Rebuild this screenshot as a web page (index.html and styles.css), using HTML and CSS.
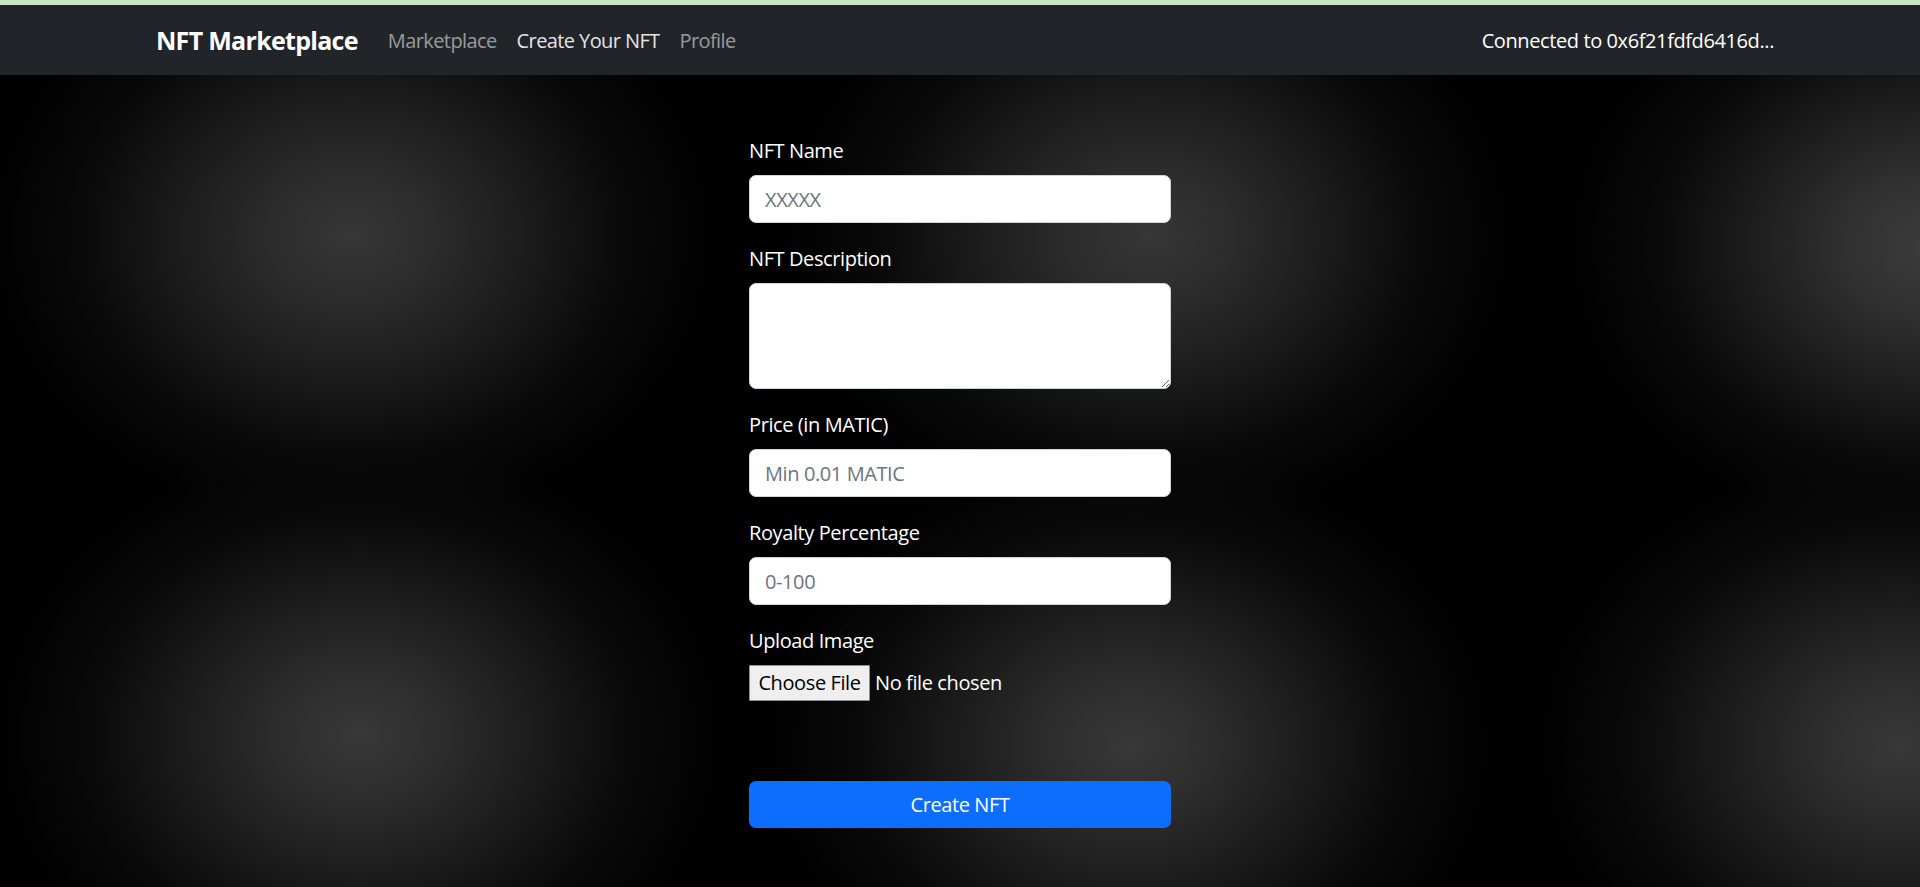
FILE: index.html
```html
<!DOCTYPE html>
<html lang="en">
<head>
<meta charset="utf-8">
<title>NFT Marketplace</title>
<link rel="stylesheet" href="styles.css">
</head>
<body>
<div class="top-strip"></div>
<nav class="navbar">
  <div class="nav-inner">
    <div class="nav-left">
      <a class="brand" href="#">NFT Marketplace</a>
      <a class="nav-link" href="#">Marketplace</a>
      <a class="nav-link active" href="#">Create Your NFT</a>
      <a class="nav-link" href="#">Profile</a>
    </div>
    <div class="nav-right">Connected to 0x6f21fdfd6416d...</div>
  </div>
</nav>
<main class="page">
  <form class="nft-form">
    <div class="field">
      <label class="field-label" for="name">NFT Name</label>
      <input class="control" id="name" type="text" placeholder="XXXXX">
    </div>
    <div class="field">
      <label class="field-label" for="desc">NFT Description</label>
      <textarea class="control control-area" id="desc"></textarea>
    </div>
    <div class="field">
      <label class="field-label" for="price">Price (in MATIC)</label>
      <input class="control" id="price" type="text" placeholder="Min 0.01 MATIC">
    </div>
    <div class="field">
      <label class="field-label" for="royalty">Royalty Percentage</label>
      <input class="control" id="royalty" type="text" placeholder="0-100">
    </div>
    <div class="field field-file">
      <label class="field-label" for="image">Upload Image</label>
      <label class="file-picker">
        <input class="file-input" id="image" type="file">
        <span class="file-btn">Choose File</span>
        <span class="file-status">No file chosen</span>
      </label>
    </div>
    <button class="submit" type="button">Create NFT</button>
  </form>
</main>
</body>
</html>
```
FILE: styles.css
```css
* { box-sizing: border-box; }
html, body { margin: 0; padding: 0; }
body {
  background: #000;
  color: #fff;
  font-family: "Open Sans", "Noto Sans", sans-serif;
  font-size: 20px;
  line-height: 1.5;
  letter-spacing: -0.4px;
}
.top-strip {
  height: 5px;
  background: #c8e3c6;
}
.navbar {
  background: #212529;
  height: 70px;
  display: flex;
  align-items: center;
  padding-top: 2px;
}
.nav-inner {
  width: 100%;
  padding: 0 146px 0 156px;
  display: flex;
  align-items: center;
  justify-content: space-between;
}
.nav-left {
  display: flex;
  align-items: center;
}
.brand {
  color: #fff;
  font-weight: 700;
  font-size: 25px;
  letter-spacing: -0.7px;
  text-decoration: none;
  margin-right: 20px;
}
.nav-link {
  color: rgba(255,255,255,0.55);
  text-decoration: none;
  padding: 0 10px;
  letter-spacing: -0.6px;
}
.nav-link.active { color: rgba(255,255,255,0.9); }
.nav-right { color: #fff; }

.page {
  min-height: 812px;
  padding-top: 60px;
  background:
    radial-gradient(ellipse 370px 300px at 352px 160px, #363636 0%, #2c2c2c 22%, #1b1b1b 48%, #090909 74%, rgba(0,0,0,0) 100%),
    radial-gradient(ellipse 370px 300px at 1150px 160px, #363636 0%, #2c2c2c 22%, #1b1b1b 48%, #090909 74%, rgba(0,0,0,0) 100%),
    radial-gradient(ellipse 370px 300px at 1930px 170px, #3c3c3c 0%, #313131 22%, #1d1d1d 48%, #090909 74%, rgba(0,0,0,0) 100%),
    radial-gradient(ellipse 370px 300px at 360px 660px, #383838 0%, #2d2d2d 22%, #1b1b1b 48%, #090909 74%, rgba(0,0,0,0) 100%),
    radial-gradient(ellipse 370px 300px at 1130px 670px, #383838 0%, #2d2d2d 22%, #1b1b1b 48%, #090909 74%, rgba(0,0,0,0) 100%),
    radial-gradient(ellipse 370px 300px at 1900px 670px, #383838 0%, #2d2d2d 22%, #1b1b1b 48%, #090909 74%, rgba(0,0,0,0) 100%),
    #000;
}
.nft-form {
  width: 422px;
  margin: 0 auto;
  display: flex;
  flex-direction: column;
}
.field {
  display: flex;
  flex-direction: column;
  margin-bottom: 20px;
}
.field-label {
  line-height: 30px;
  padding-top: 1px;
  margin-bottom: 9px;
}
.control {
  font-family: inherit;
  font-size: 20px;
  letter-spacing: -0.4px;
  height: 48px;
  padding: 7px 15px;
  border: 1px solid #ced4da;
  border-radius: 7px;
  background: #fff;
  color: #212529;
  outline: none;
}
.control::placeholder { color: #6c757d; }
.control-area {
  height: 106px;
  resize: vertical;
}
.field-file { margin-bottom: 80px; }
.file-picker {
  display: flex;
  align-items: center;
  height: 36px;
}
.file-input { display: none; }
.file-btn {
  height: 36px;
  width: 121px;
  display: flex;
  align-items: center;
  justify-content: center;
  background: #efefef;
  color: #000;
  border: 1px solid #8f8f8f;
  border-radius: 1px;
  margin-right: 5px;
  white-space: nowrap;
}
.file-status { color: #fff; white-space: nowrap; }
.submit {
  height: 47px;
  width: 100%;
  border: none;
  border-radius: 7px;
  background: #0d6efd;
  color: #fff;
  font-family: inherit;
  font-size: 20px;
  letter-spacing: -0.4px;
}
```
